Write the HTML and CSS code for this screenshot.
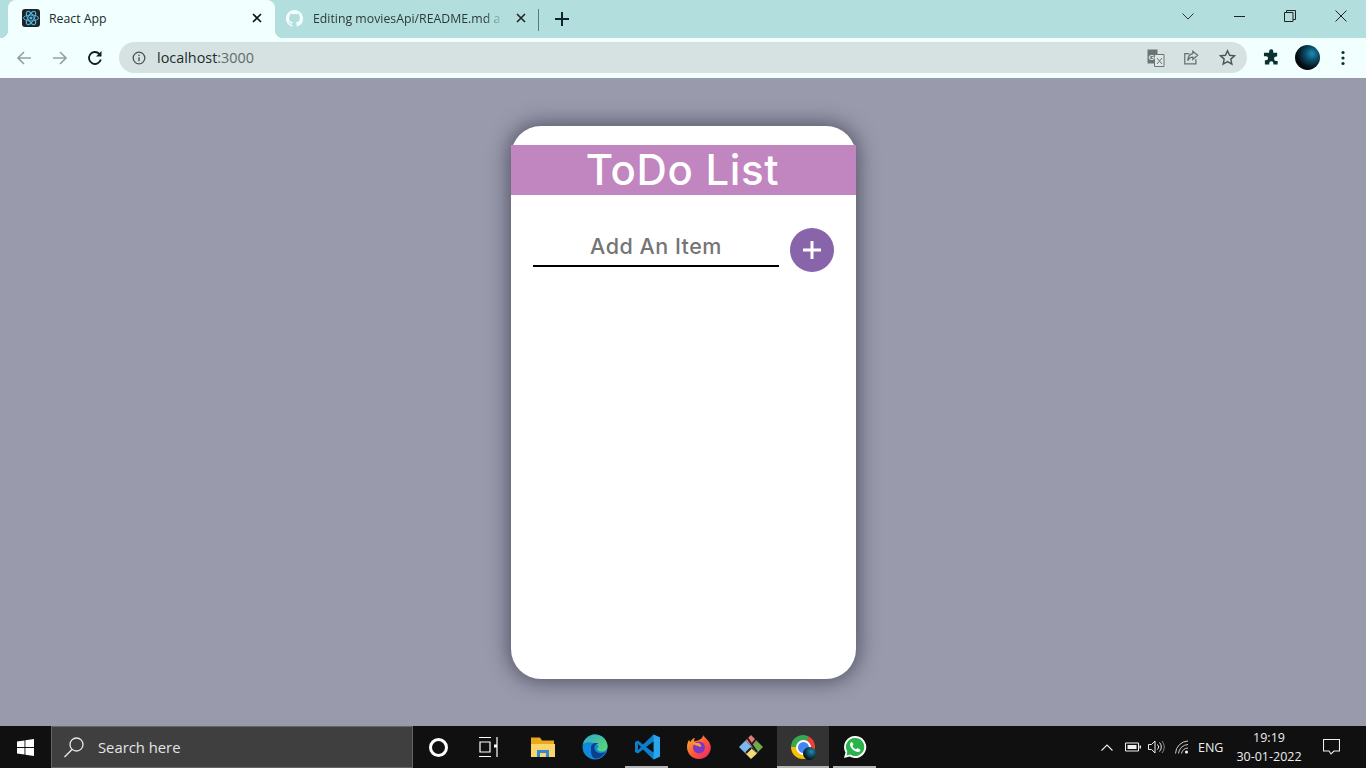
FILE: index.html
```html
<!DOCTYPE html>
<html lang="en">
<head>
<meta charset="utf-8">
<title>React App</title>
<link rel="stylesheet" href="styles.css">
</head>
<body>
<header class="tabstrip">
  <div class="tab active">
    <span class="favicon react"><svg viewBox="0 0 18 18" width="18" height="18"><g fill="none" stroke="#4fb6d8" stroke-width="1"><ellipse cx="9" cy="9" rx="7.500" ry="3"/><ellipse cx="9" cy="9" rx="7.500" ry="3" transform="rotate(60 9 9)"/><ellipse cx="9" cy="9" rx="7.500" ry="3" transform="rotate(120 9 9)"/></g><circle cx="9" cy="9" r="1.600" fill="#4fb6d8"/></svg></span>
    <span class="tab-title">React App</span>
    <svg class="tab-x" viewBox="0 0 10 10" width="10" height="10"><path d="M1 1l8 8M9 1l-8 8" stroke="#111" stroke-width="1.600"/></svg>
  </div>
  <div class="tab inactive">
    <svg class="gh" viewBox="0 0 16 16" width="17" height="17"><path fill="#f4ffff" d="M8 0C3.580 0 0 3.580 0 8c0 3.540 2.290 6.530 5.470 7.590.4.070.55-.17.55-.38 0-.19-.01-.82-.01-1.490-2.010.37-2.530-.49-2.690-.94-.09-.23-.48-.94-.82-1.130-.28-.15-.68-.52-.01-.53.63-.01 1.080.58 1.230.82.72 1.210 1.870.87 2.330.66.07-.52.28-.87.51-1.070-1.780-.2-3.640-.89-3.640-3.950 0-.87.31-1.590.82-2.150-.08-.2-.36-1.020.08-2.120 0 0 .67-.21 2.200.82.64-.18 1.320-.27 2-.27s1.360.09 2 .27c1.530-1.040 2.200-.82 2.200-.82.44 1.100.16 1.920.08 2.120.51.56.82 1.270.82 2.150 0 3.070-1.870 3.750-3.650 3.950.29.25.54.73.54 1.480 0 1.070-.01 1.930-.01 2.200 0 .21.15.46.55.38A8.010 8.010 0 0 0 16 8c0-4.420-3.580-8-8-8z"/></svg>
    <span class="tab-title fade">Editing moviesApi/README.md a</span>
    <svg class="tab-x" viewBox="0 0 10 10" width="10" height="10"><path d="M1 1l8 8M9 1l-8 8" stroke="#222" stroke-width="1.600"/></svg>
  </div>
  <span class="tab-sep"></span>
  <svg class="newtab" viewBox="0 0 14 14" width="14" height="14"><path d="M7 0v14M0 7h14" stroke="#123" stroke-width="2"/></svg>
  <div class="win-controls">
    <svg class="wc wc-first" viewBox="0 0 14 14" width="14" height="14"><path d="M1.500 4.500L7 10l5.500-5.500" fill="none" stroke="#333" stroke-width="1"/></svg>
    <svg class="wc wc-min" viewBox="0 0 12 12" width="12" height="12"><path d="M0 6.500h11" stroke="#222" stroke-width="1"/></svg>
    <svg class="wc" viewBox="0 0 12 12" width="12" height="12"><path d="M.5 2.500h8.500v9H.5zM2.500 2.500V.5h9v9H9" fill="none" stroke="#222" stroke-width="1"/></svg>
    <svg class="wc" viewBox="0 0 12 12" width="12" height="12"><path d="M.5.500l11 11M11.500.500l-11 11" stroke="#222" stroke-width="1"/></svg>
  </div>
</header>

<nav class="toolbar">
  <svg class="nav-ic" viewBox="0 0 16 16" width="16" height="16"><path d="M15 8H2M8 2L2 8l6 6" fill="none" stroke="#93a3a3" stroke-width="1.700"/></svg>
  <svg class="nav-ic" viewBox="0 0 16 16" width="16" height="16"><path d="M1 8h13M8 2l6 6-6 6" fill="none" stroke="#93a3a3" stroke-width="1.700"/></svg>
  <svg class="nav-ic reload" viewBox="0 0 16 16" width="16" height="16"><path d="M13.800 9.500A6 6 0 1 1 12.300 3.800" fill="none" stroke="#0c1f1f" stroke-width="1.800"/><path d="M14.500 1v5.500H9z" fill="#0c1f1f"/></svg>
  <div class="omnibox">
    <svg class="info" viewBox="0 0 14 14" width="14" height="14"><circle cx="7" cy="7" r="5.800" fill="none" stroke="#4a5555" stroke-width="1.300"/><path d="M7 6.200v4M7 3.800v1.300" stroke="#4a5555" stroke-width="1.400"/></svg>
    <span class="url">localhost<span class="port">:3000</span></span>
    <svg class="omni-ic translate" viewBox="0 0 18 18" width="18" height="18"><path d="M.5 .5h10v14H.5z" fill="#6b7474"/><path d="M7.500 5.500h9.500v12H7.500z" fill="#dfe8e7" stroke="#6b7474"/><text x="1.500" y="10.500" class="tr-g">G</text><path d="M10 9l5 6M15 9l-5 6" stroke="#6b7474" stroke-width="1"/></svg>
    <svg class="omni-ic share" viewBox="0 0 18 18" width="16" height="16"><path d="M14.500 10.500V15.500H2V4H7" fill="none" stroke="#66706f" stroke-width="1.400"/><path d="M11 1.500L16.500 6 11 10.500V8C8 8 6.500 9.500 5.500 12 5.500 8 7.500 4.500 11 4z" fill="none" stroke="#66706f" stroke-width="1.400"/></svg>
    <svg class="omni-ic star" viewBox="0 0 18 18" width="17" height="17"><path d="M9 1.800l2.200 4.800 5.200.6-3.900 3.500 1.100 5.200L9 13.300 4.400 15.900l1.100-5.200L1.600 7.200l5.200-.6z" fill="none" stroke="#4a5555" stroke-width="1.500"/></svg>
  </div>
  <svg class="ext" viewBox="0 0 18 18" width="17" height="17"><path fill="#0a3030" d="M6.500 2.500a2.200 2.200 0 0 1 4.400 0V4H15v4h-1a2.300 2.300 0 0 0 0 4.600h1.500V16.500H11v-1.200a2.200 2.200 0 0 0-4.400 0v1.200H2V12h1.200a2.200 2.200 0 0 0 0-4.400H1V4h5.500z"/></svg>
  <span class="avatar"></span>
  <svg class="kebab" viewBox="0 0 4 16" width="4" height="16"><g fill="#0a3030"><circle cx="2" cy="2.500" r="1.600"/><circle cx="2" cy="8" r="1.600"/><circle cx="2" cy="13.500" r="1.600"/></g></svg>
</nav>

<main class="page">
  <section class="card">
    <h1 class="title">ToDo List</h1>
    <form class="add-row">
      <input class="add-input" type="text" placeholder="Add An Item">
      <button class="add-btn" type="button" aria-label="Add">
        <svg viewBox="0 0 20 20" width="20" height="20"><path d="M10 1v18M1 10h18" stroke="#fff" stroke-width="3"/></svg>
      </button>
    </form>
  </section>
</main>

<footer class="taskbar">
  <div class="start"><svg viewBox="0 0 17 17" width="17" height="17"><path fill="#fff" d="M0 2.500L7.500 1.400V8H0zM8.400 1.300L17 0V8H8.400zM0 9h7.500v6.600L0 14.500zM8.400 9H17v8l-8.600-1.300z"/></svg></div>
  <div class="search">
    <svg viewBox="0 0 22 22" width="22" height="22"><circle cx="13.500" cy="8.500" r="6.500" fill="none" stroke="#e8e8e8" stroke-width="1.300"/><path d="M9 13.500L1.500 21" stroke="#e8e8e8" stroke-width="1.500"/></svg>
    <span>Search here</span>
  </div>
  <div class="apps">
    <div class="app shift-cortana"><span class="cortana"></span></div>
    <div class="app shift-view"><svg viewBox="0 0 20 20" width="20" height="20"><path d="M0 .5h12M0 19.500h12M1 5h10v10H1zM18 0v20" fill="none" stroke="#fff" stroke-width="1.200"/><rect x="15" y="7.500" width="3" height="3" fill="#fff"/></svg></div>
    <div class="app"><svg viewBox="0 0 24 22" width="24" height="22"><path d="M0 1.500h9l2 3h12v4H0z" fill="#e8a91f"/><path d="M0 8h24v13H0z" fill="#fbd568"/><path d="M6 14v7h3v-4h6v4h3v-7z" fill="#2f88d8"/></svg></div>
    <div class="app"><svg viewBox="0 0 26 26" width="26" height="26"><defs><linearGradient id="eg" x1="0" y1="0" x2="1" y2="1"><stop offset="0" stop-color="#2fa8d0"/><stop offset="1" stop-color="#5fdc6a"/></linearGradient></defs><circle cx="13" cy="13" r="12.500" fill="#1289dc"/><path d="M1 10C3 3 9 .5 13 .5c7 0 12.500 5.500 12.500 12 0 3.500-3 5-6 5-3 0-4.500-1.500-4.500-3 1.500-.5 2-2 .5-3.500C13 8 5 7 1 10z" fill="url(#eg)"/><path d="M9 14c0-3 2-5 5-5 1 0 2 .5 2.500 1-2-.5-4.500 1-4 4.500.5 4 6 6 11 3.500-2 4-6.500 6.500-10 6.500C9 24 9 18 9 14z" fill="#0c3f8c"/></svg></div>
    <div class="app active-mark"><svg viewBox="0 0 25 26" width="25" height="26"><path d="M18.500.5L25 3.500v19l-6.500 3L8 15.500l-5 4-3-1.500V8l3-1.500 5 4z" fill="#0b7fc9"/><path d="M18.500.5L25 3.500v19l-6.500 3z" fill="#2aa5ec"/><path d="M18.500 7.500L11 13l7.500 5.500z" fill="#101010"/><path d="M3 10v6l3-3z" fill="#101010"/></svg></div>
    <div class="app"><svg viewBox="0 0 24 24" width="24" height="24"><defs><linearGradient id="ff" x1="0" y1="0" x2="1" y2="1"><stop offset="0" stop-color="#ffbd2e"/><stop offset=".5" stop-color="#ff5a36"/><stop offset="1" stop-color="#e3246e"/></linearGradient></defs><path d="M16 0c1 2 6 5 7.500 10 1.500 7-3.500 14-11.500 14C5 24 0 18.500 0 12c0-3 1-5.500 2-7 .5 1 1 1.500 1.500 2C4.500 4.500 6.500 3 8 3c-1 1.500-1 2.500-.5 3.500 3-1 8.500-2 8.500-6.500z" fill="url(#ff)"/><circle cx="12" cy="12.500" r="6" fill="#7a38c9"/><path d="M5 8h7c1 1 3 2 2 4-2-1-6-1-9-4z" fill="#ff9a2e"/></svg></div>
    <div class="app"><svg viewBox="0 0 26 26" width="26" height="26"><path d="M1 13l6.500-6.500L14 13l-6.500 6.500z" fill="#7ab8ee"/><path d="M7.500 6.500L13 1l6 6-5 6z" fill="#e07a78"/><path d="M13.500 12.500L19 7l6 6-6.500 6.500z" fill="#6faa4f"/><path d="M7.500 19.500L13 14l6 5.500L13 25z" fill="#f2dc78"/><path d="M9 3.500L19 18M13 14l-5 5M14 10l4-5" fill="none" stroke="#1a1a1a" stroke-width="1.800"/></svg></div>
    <div class="app current active-mark"><span class="chrome"><span class="chrome-dot"></span></span><span class="chrome-profile"></span></div>
    <div class="app active-mark"><svg viewBox="0 0 24 24" width="24" height="24"><path d="M12 1a11 11 0 0 0-9.500 16.500L1 23l5.700-1.500A11 11 0 1 0 12 1z" fill="#fff"/><path d="M12 3a9 9 0 0 0-7.700 13.700L3.500 20.500l3.800-1A9 9 0 1 0 12 3z" fill="#29b34a"/><path d="M8.500 7c-.5 0-1.500 1-1.500 2.500 0 3 4.500 7.500 8 7.500 1.500 0 2.500-1 2.500-2 0-.5-2.500-1.800-3-1.800s-1 1-1.500 1c-1 0-3.500-2.500-3.500-3.500 0-.5 1-1 1-1.500S9 7 8.500 7z" fill="#fff"/></svg></div>
  </div>
  <div class="tray">
    <svg class="tray-up" viewBox="0 0 12 7" width="12" height="7"><path d="M.5 6.500L6 1l5.500 5.500" fill="none" stroke="#eee" stroke-width="1.100"/></svg>
    <svg class="tray-bat" viewBox="0 0 16 10" width="16" height="10"><path d="M.5 1h13v8H.5z" fill="none" stroke="#eee"/><path d="M2.500 3h9v4h-9z" fill="#eee"/><path d="M14.500 3.500H16v3h-1.500z" fill="#eee"/></svg>
    <svg class="tray-vol" viewBox="0 0 17 14" width="17" height="14"><path d="M.5 4.500h3L7 1v12L3.500 9.500h-3z" fill="none" stroke="#eee"/><path d="M9.500 4.500a3.500 3.500 0 0 1 0 5M11.500 2.500a6.500 6.500 0 0 1 0 9" fill="none" stroke="#eee"/><path d="M14 1a9 9 0 0 1 0 12" fill="none" stroke="#888"/></svg>
    <svg class="tray-wifi" viewBox="0 0 14 14" width="14" height="14"><path d="M.5 13.500A13 13 0 0 1 13 1M3.500 13.500A10 10 0 0 1 13 4.500M6.500 13.500A7 7 0 0 1 13 8" fill="none" stroke="#ccc"/><circle cx="11.500" cy="12" r="1.500" fill="#fff"/></svg>
    <span class="lang">ENG</span>
    <div class="clock"><span>19:19</span><span>30-01-2022</span></div>
    <svg class="notif" viewBox="0 0 17 16" width="17" height="16"><path d="M.5.500h16v11.500H11L8 15l-2-3H.5z" fill="none" stroke="#eee" stroke-width="1.100"/></svg>
  </div>
</footer>
</body>
</html>
```

FILE: styles.css
```css
* { box-sizing: border-box; }
html, body { margin: 0; height: 100%; overflow: hidden; }
body { display: flex; flex-direction: column; height: 768px; font-family: "Open Sans", "Liberation Sans", sans-serif; }

/* browser chrome */
.tabstrip { height: 38px; background: #b2dfdd; display: flex; align-items: flex-end; padding-left: 8px; flex: none; }
.tab { height: 38px; width: 267px; display: flex; align-items: center; flex: none; }
.tab.active { background: #f1ffff; border-radius: 8px 8px 0 0; padding: 0 13px 2px 14px; position: relative; }
.tab.active::before, .tab.active::after { content: ""; position: absolute; bottom: 0; width: 8px; height: 8px; }
.tab.active::before { left: -8px; background: radial-gradient(circle at 0 0, transparent 8px, #f1ffff 8.500px); }
.tab.active::after { right: -8px; background: radial-gradient(circle at 100% 0, transparent 8px, #f1ffff 8.500px); }
.favicon.react { width: 18px; height: 18px; background: #20232a; border-radius: 3px; flex: none; display: block; }
.favicon svg { display: block; }
.tab-title { font-size: 12.300px; color: #1c2b2b; margin-left: 9px; flex: 1; white-space: nowrap; overflow: hidden; }
.tab.inactive { width: 264px; padding: 0 13px 2px 11px; }
.gh { flex: none; }
.tab-title.fade { color: #2d3a3a; margin-left: 10px; margin-right: 12px; -webkit-mask-image: linear-gradient(to right, #000 90%, transparent 100%); mask-image: linear-gradient(to right, #000 90%, transparent 100%); }
.tab-x { flex: none; }
.tab-sep { width: 1px; height: 22px; background: #5d7a78; margin-bottom: 7px; margin-left: -1px; flex: none; }
.newtab { margin: 0 0 12px 16px; flex: none; }
.win-controls { margin-left: auto; display: flex; align-items: center; height: 32px; align-self: flex-start; }
.wc { flex: none; margin-right: 39px; }
.wc-first { margin-right: 39px; }
.wc-min { margin-right: 38px; }
.wc:last-child { margin-right: 19px; }

.toolbar { height: 37px; background: #f1ffff; display: flex; align-items: center; flex: none; padding: 2px 0 0 16px; }
.nav-ic { flex: none; margin-right: 20px; }
.reload { margin-left: -1px; }
.omnibox { width: 1128px; height: 31px; margin-left: -4px; border-radius: 16px; background: #d5e2e1; display: flex; align-items: center; padding: 0 11px 0 13px; flex: none; }
.info { flex: none; }
.url { font-size: 14.400px; color: #1c2b2b; margin-left: 11px; flex: 1; }
.port { color: #5f6b6b; }
.omni-ic { flex: none; margin-left: 18px; }
.omni-ic.share { margin-left: 17px; }
.omni-ic.star { margin-left: 20px; }
.tr-g { font-family: "Liberation Sans", sans-serif; font-size: 8px; font-weight: 700; fill: #dfe8e7; }
.translate { margin-right: 1px; }
.ext { flex: none; margin-left: 16px; }
.avatar { width: 25px; height: 25px; border-radius: 50%; margin-left: 15px; flex: none; background: radial-gradient(circle at 68% 35%, #1c8db3 0, #0b4a66 30%, #04090d 65%); }
.kebab { flex: none; margin-left: 21px; }

/* page */
.page { flex: 1; background: #9a9aad; border-top: 3px solid #f1ffff; display: flex; justify-content: center; padding: 48px 0 0 1px; min-height: 0; }
.card { width: 345px; height: 553px; background: #fff; border-radius: 30px; box-shadow: 0 0 20px 3px rgba(40, 40, 60, .6); padding-top: 19px; }
.title { margin: 0; height: 50px; padding-right: 2px; background: #c185c0; color: #fff; text-align: center; font-family: Inter, "Open Sans", sans-serif; font-size: 42px; font-weight: 500; line-height: 50px; letter-spacing: .65px; }
.add-row { display: flex; align-items: flex-start; padding: 33px 0 0 22px; }
.add-input { width: 246px; height: 39px; border: 0; border-bottom: 2px solid #000; outline: 0; background: transparent; text-align: center; font-family: Inter, "Open Sans", sans-serif; font-size: 21.500px; font-weight: 500; letter-spacing: .5px; padding: 0 0 2px; }
.add-input::placeholder { color: #757575; opacity: 1; }
.add-btn { width: 44px; height: 44px; border: 0; border-radius: 50%; background: #8865ab; margin-left: 11px; padding: 0; display: flex; align-items: center; justify-content: center; }

/* taskbar */
.taskbar { height: 42px; background: #101010; display: flex; align-items: stretch; flex: none; }
.start { width: 51px; display: flex; align-items: center; justify-content: center; flex: none; }
.search { width: 362px; background: #3f3f3f; border: 1px solid #646464; display: flex; align-items: center; padding-left: 11px; color: #e4e4e4; font-size: 14.800px; flex: none; }
.search span { margin-left: 13px; }
.apps { display: flex; flex: none; }
.app { width: 52px; display: flex; align-items: center; justify-content: center; position: relative; flex: none; }
.active-mark::after { content: ""; position: absolute; left: 4px; right: 5px; bottom: 0; height: 2px; background: #b4b4b4; }
.app.current { background: #333; }
.app.current::after { left: 0; right: 0; }
.shift-cortana { padding-right: 2px; }
.shift-view { padding-right: 4px; }
.cortana { width: 19px; height: 19px; border: 3px solid #fff; border-radius: 50%; display: block; }
.chrome { width: 24px; height: 24px; border-radius: 50%; display: flex; align-items: center; justify-content: center; background: conic-gradient(from 30deg, #ea4335 0 120deg, #fbbc05 120deg 240deg, #34a853 240deg 360deg); }
.chrome-dot { width: 11px; height: 11px; border-radius: 50%; background: #4285f4; border: 2px solid #fff; box-sizing: content-box; }
.chrome-profile { position: absolute; width: 13px; height: 13px; left: 26px; top: 21px; border-radius: 50%; background: radial-gradient(circle at 65% 35%, #1c8db3 0, #04090d 75%); }
.tray { margin-left: auto; display: flex; align-items: center; color: #eee; flex: none; }
.tray-up { margin-right: 12px; }
.tray-bat { margin-right: 7px; }
.tray-vol { margin-right: 10px; }
.tray-wifi { margin-right: 9px; }
.lang { font-size: 12.500px; width: 38px; }
.clock { width: 66px; display: flex; flex-direction: column; align-items: center; font-size: 12.500px; line-height: 19px; }
.notif { margin: 0 26px 0 21px; }
```
